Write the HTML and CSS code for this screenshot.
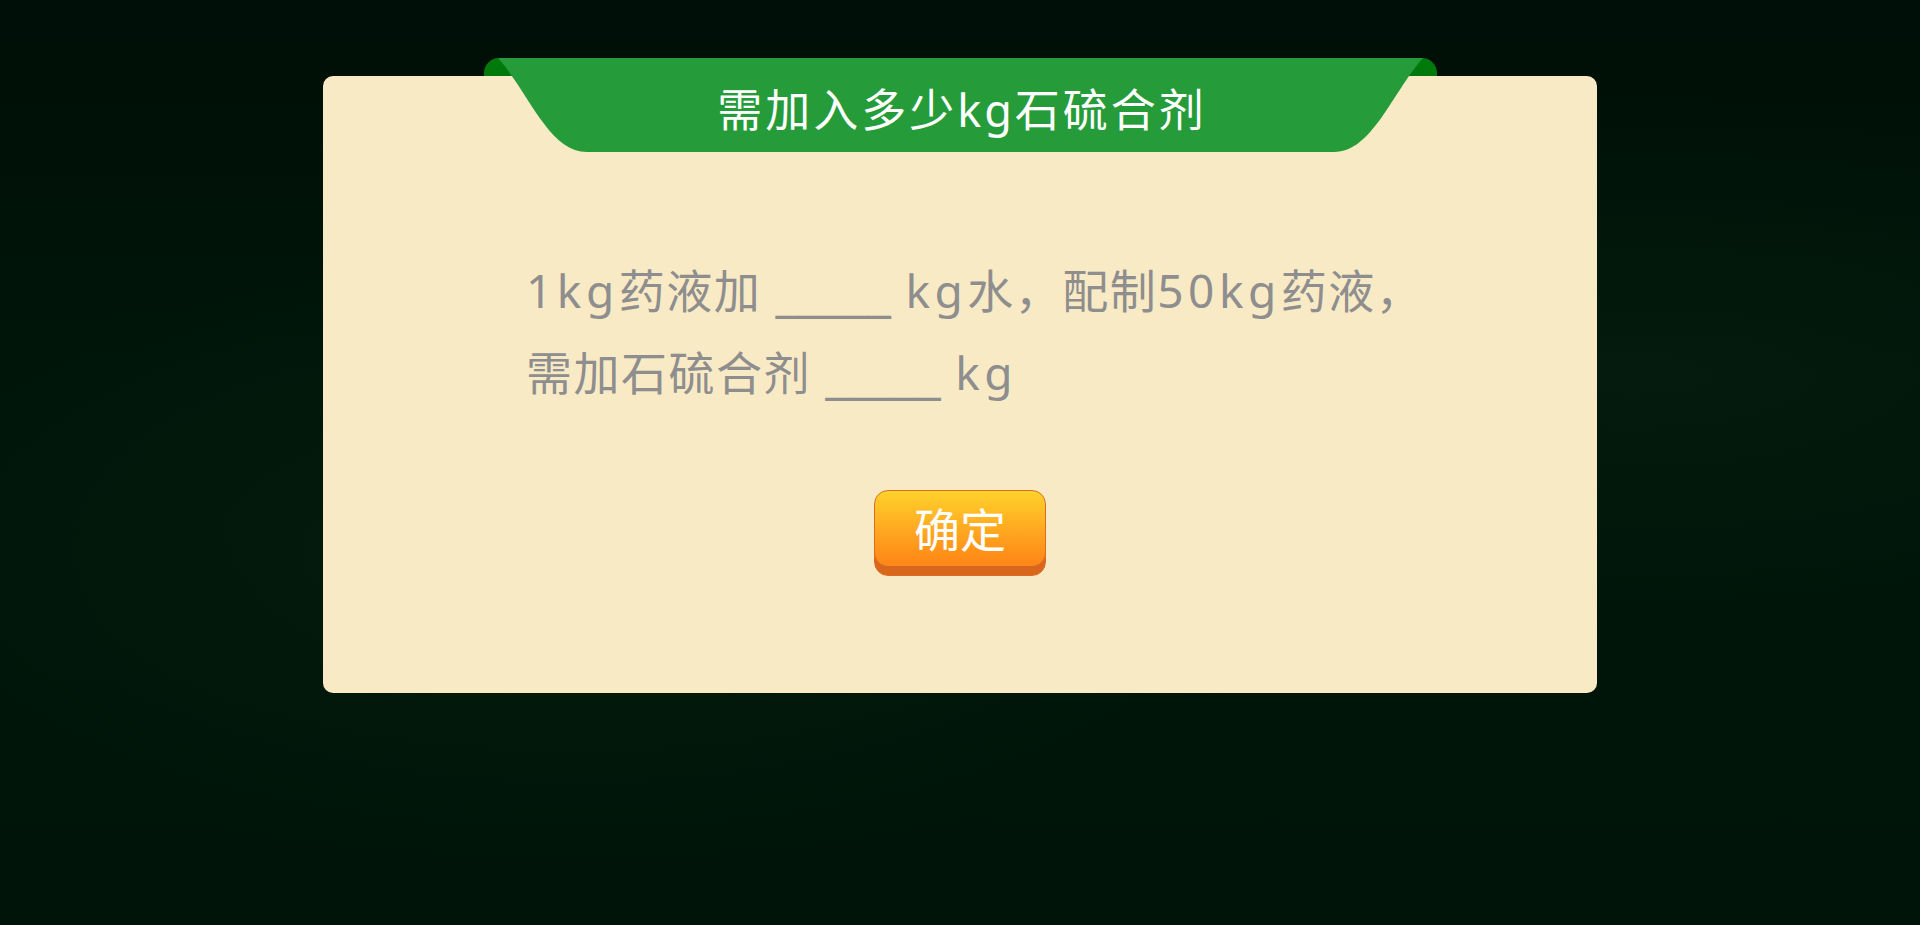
FILE: index.html
```html
<!DOCTYPE html>
<html lang="zh-CN">
<head>
<meta charset="utf-8">
<title>需加入多少kg石硫合剂</title>
<link rel="stylesheet" href="styles.css">
</head>
<body>
<div class="page">
  <div class="card">
    <div class="ribbon">
      <svg class="ribbon-bg" width="953" height="95" viewBox="0 0 953 95">
        <path d="M0,18 V15 A15,15 0 0 1 15,0 H938 A15,15 0 0 1 953,15 V18 Z" fill="#027a0b"/>
        <path d="M14,0 C45,35 65,94 103,94 H850 C888,94 908,35 939,0 Z" fill="#259c39"/>
      </svg>
      <h1 class="ribbon-title">需加入多少kg石硫合剂</h1>
    </div>
    <div class="question">
      <p class="line"><span class="latin">1kg</span>药液加<span class="blank"> _____ </span><span class="latin">kg</span>水，配制<span class="latin">50kg</span>药液，</p>
      <p class="line">需加石硫合剂<span class="blank"> _____ </span><span class="latin">kg</span></p>
    </div>
    <div class="actions">
      <button class="btn-ok" type="button">确定</button>
    </div>
  </div>
</div>
</body>
</html>
```

FILE: styles.css
```css
html, body {
  margin: 0;
  padding: 0;
}
body {
  width: 1920px;
  height: 925px;
  overflow: hidden;
  background: #001409;
  background-image:
    radial-gradient(ellipse at 30% 60%, rgba(20, 50, 25, 0.25), rgba(0,0,0,0) 40%),
    radial-gradient(ellipse at 85% 40%, rgba(20, 50, 25, 0.2), rgba(0,0,0,0) 35%),
    linear-gradient(#000f07, #00150a 40%, #001409);
  font-family: "Noto Sans", "Noto Sans CJK SC", sans-serif;
}
.page {
  padding-top: 76px;
}
.card {
  position: relative;
  width: 1274px;
  height: 617px;
  margin: 0 auto;
  background: #f9eac6;
  border-radius: 10px;
  box-sizing: border-box;
  padding: 173px 0 0 203px;
}
.ribbon {
  position: absolute;
  top: -18px;
  left: 50%;
  width: 953px;
  height: 95px;
  margin-left: -476px;
  display: flex;
  justify-content: center;
  align-items: center;
}
.ribbon-bg {
  position: absolute;
  left: 0;
  top: 0;
  display: block;
}
.ribbon-title {
  position: relative;
  margin: 0;
  padding-top: 8px;
  padding-left: 3px;
  color: #ffffff;
  font-weight: 400;
  font-size: 45px;
  line-height: 52px;
  letter-spacing: 3px;
  font-family: "Noto Sans", "Noto Sans CJK SC", sans-serif;
}
.question {
  color: #8e8e8e;
  font-size: 46px;
  letter-spacing: 1.5px;
}
.line {
  margin: 0;
  height: 82px;
  line-height: 82px;
  white-space: pre;
}
.latin {
  letter-spacing: 4.5px;
}
.blank {
  font-family: "DejaVu Sans", "Noto Sans CJK SC", sans-serif;
  letter-spacing: 0;
  line-height: 1;
}
.actions {
  display: flex;
  justify-content: center;
  margin-top: 77px;
  margin-left: -203px;
}
.btn-ok {
  width: 172px;
  height: 86px;
  padding: 0 0 9px;
  box-sizing: border-box;
  border: 1px solid #e06a1d;
  border-radius: 14px;
  background: linear-gradient(#ffd22c, #ffa51f 50%, #ff7c14);
  box-shadow: inset 0 -9px 0 #d8661c, inset 0 -10px 0 #f58a22;
  color: #ffffff;
  font-family: "Noto Sans", "Noto Sans CJK SC", sans-serif;
  font-size: 46px;
  line-height: 76px;
  cursor: pointer;
}
```
